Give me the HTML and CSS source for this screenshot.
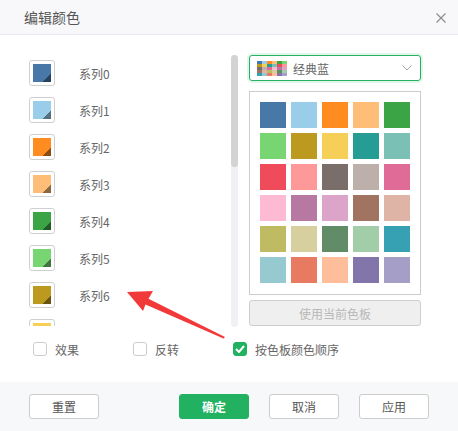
FILE: index.html
```html
<!DOCTYPE html>
<html lang="zh">
<head>
<meta charset="utf-8">
<title>编辑颜色</title>
<link rel="stylesheet" href="styles.css">
</head>
<body>
<div class="dialog">
  <div class="header">
    <span class="title">编辑颜色</span>
    <svg class="close" width="10" height="10" viewBox="0 0 10 10"><path d="M0.5 0.5 L9.5 9.5 M9.5 0.5 L0.5 9.5" stroke="#8a8a8a" stroke-width="1.1" fill="none"/></svg>
  </div>
  <div class="main">
    <div class="top">
      <div class="list">
        <div class="row"><span class="sw"><i style="background:#4778a8"></i></span><span class="lbl">系列0</span></div>
        <div class="row"><span class="sw"><i style="background:#9acde9"></i></span><span class="lbl">系列1</span></div>
        <div class="row"><span class="sw"><i style="background:#ff8c21"></i></span><span class="lbl">系列2</span></div>
        <div class="row"><span class="sw"><i style="background:#ffbe78"></i></span><span class="lbl">系列3</span></div>
        <div class="row"><span class="sw"><i style="background:#3ba546"></i></span><span class="lbl">系列4</span></div>
        <div class="row"><span class="sw"><i style="background:#78d672"></i></span><span class="lbl">系列5</span></div>
        <div class="row"><span class="sw"><i style="background:#bb9a1f"></i></span><span class="lbl">系列6</span></div>
        <div class="row"><span class="sw"><i style="background:#f5cf57"></i></span><span class="lbl">系列7</span></div>
      </div>
      <div class="track"><div class="thumb"></div></div>
      <div class="right">
        <div class="select">
          <span class="mosaic">
            <i style="background:#4778a8"></i><i style="background:#9acde9"></i><i style="background:#ff8c21"></i><i style="background:#ffbe78"></i><i style="background:#3ba546"></i><i style="background:#78d672"></i>
            <i style="background:#bb9a1f"></i><i style="background:#f5cf57"></i><i style="background:#259d94"></i><i style="background:#7bc0b5"></i><i style="background:#f04b5a"></i><i style="background:#ff9999"></i>
            <i style="background:#7a6e6b"></i><i style="background:#bdb0ab"></i><i style="background:#e06b97"></i><i style="background:#feb9d3"></i><i style="background:#b778a1"></i><i style="background:#dba4c8"></i>
            <i style="background:#a07460"></i><i style="background:#ddb4a6"></i><i style="background:#bfbb63"></i><i style="background:#d8cf9f"></i><i style="background:#618c67"></i><i style="background:#a2cda9"></i>
            <i style="background:#36a1b3"></i><i style="background:#96c9d0"></i><i style="background:#e77a60"></i><i style="background:#febd9b"></i><i style="background:#8275a9"></i><i style="background:#a59fc8"></i>
          </span>
          <span class="sel-text">经典蓝</span>
          <svg class="chev" width="10" height="6" viewBox="0 0 10 6"><path d="M0.5 0.5 L5 5 L9.5 0.5" stroke="#aaa" stroke-width="1" fill="none"/></svg>
        </div>
        <div class="palette">
          <i style="background:#4778a8"></i><i style="background:#9acde9"></i><i style="background:#ff8c21"></i><i style="background:#ffbe78"></i><i style="background:#3ba546"></i>
          <i style="background:#78d672"></i><i style="background:#bb9a1f"></i><i style="background:#f5cf57"></i><i style="background:#259d94"></i><i style="background:#7bc0b5"></i>
          <i style="background:#f04b5a"></i><i style="background:#ff9999"></i><i style="background:#7a6e6b"></i><i style="background:#bdb0ab"></i><i style="background:#e06b97"></i>
          <i style="background:#feb9d3"></i><i style="background:#b778a1"></i><i style="background:#dba4c8"></i><i style="background:#a07460"></i><i style="background:#ddb4a6"></i>
          <i style="background:#bfbb63"></i><i style="background:#d8cf9f"></i><i style="background:#618c67"></i><i style="background:#a2cda9"></i><i style="background:#36a1b3"></i>
          <i style="background:#96c9d0"></i><i style="background:#e77a60"></i><i style="background:#febd9b"></i><i style="background:#8275a9"></i><i style="background:#a59fc8"></i>
        </div>
        <div class="use-btn">使用当前色板</div>
      </div>
    </div>
    <div class="options">
      <label class="opt o1"><span class="cb"></span>效果</label>
      <label class="opt o2"><span class="cb"></span>反转</label>
      <label class="opt"><span class="cb on"><svg width="10" height="8" viewBox="0 0 10 8"><path d="M1 4 L4 7 L9 1" stroke="#fff" stroke-width="2" fill="none"/></svg></span>按色板颜色顺序</label>
    </div>
  </div>
  <div class="footer">
    <div class="btn reset">重置</div>
    <div class="btn primary">确定</div>
    <div class="btn">取消</div>
    <div class="btn">应用</div>
  </div>
  <svg class="arrow" width="458" height="431" viewBox="0 0 458 431">
    <polygon points="127,292 153,291 148.5,298.8 225,337 223.5,338.5 145.5,304.5 143,311" fill="#f2393a"/>
  </svg>
</div>
</body>
</html>
```
FILE: styles.css
```css
* { box-sizing: border-box; }
html, body { margin: 0; padding: 0; background: #fff; }
body { font-family: "Noto Sans CJK SC", "Noto Sans", sans-serif; color: #666; }
.dialog { position: relative; width: 458px; height: 431px; display: flex; flex-direction: column; background: #fff; overflow: hidden; }
.header { height: 35px; flex: none; background: #f8f8fa; border-bottom: 1px solid #e6e7ef; display: flex; align-items: center; justify-content: space-between; padding: 0 12px 0 24px; }
.title { font-size: 14px; color: #555; line-height: 1; }
.close { display: block; margin-top: 1px; }
.main { flex: 1; padding: 20px 0 0 29px; }
.top { display: flex; height: 272px; }
.list { width: 202px; height: 271px; overflow: hidden; padding-top: 5px; }
.row { display: flex; align-items: center; height: 26px; margin-bottom: 11px; }
.sw { position: relative; width: 26px; height: 26px; border: 1px solid #cfcfcf; border-radius: 3px; padding: 3px; flex: none; }
.sw i { display: block; width: 18px; height: 18px; position: relative; }
.sw i::after { content: ""; position: absolute; right: 0; bottom: 0; width: 8px; height: 8px; background: linear-gradient(to bottom right, transparent 50%, rgba(0,0,0,0.45) 50%); }
.lbl { margin-left: 24px; font-size: 12px; color: #666; }
.track { width: 7px; height: 272px; background: #f0f1f4; border-radius: 4px; margin-left: 0; flex: none; }
.thumb { height: 112px; background: #d3d3d3; border-radius: 4px; }
.right { width: 172px; margin-left: 11px; display: flex; flex-direction: column; }
.select { height: 26px; border: 1px solid #21b161; border-radius: 3px; box-shadow: 0 0 0 2px rgba(33,177,97,0.12); display: flex; align-items: center; padding: 0 8px 0 7px; }
.mosaic { display: grid; grid-template-columns: repeat(6, 5px); grid-auto-rows: 3px; width: 30px; height: 15px; flex: none; }
.mosaic i { display: block; }
.sel-text { margin-left: 6px; font-size: 12px; color: #666; flex: 1; }
.chev { display: block; }
.palette { margin-top: 10px; border: 1px solid #cccccc; padding: 10px 11px 11px 10px; display: grid; grid-template-columns: repeat(5, 26px); grid-auto-rows: 26px; gap: 5px; }
.palette i { display: block; }
.use-btn { margin-top: 5px; height: 26px; border: 1px solid #cfcfcf; border-radius: 3px; background: #efefef; color: #b8b8b8; font-size: 12px; display: flex; align-items: center; justify-content: center; }
.options { display: flex; align-items: center; height: 20px; margin-top: 12px; padding-left: 4px; }
.opt { display: flex; align-items: center; font-size: 12px; color: #666; }
.o1, .o2 { width: 100px; }
.cb { width: 14px; height: 14px; border: 1px solid #cccccc; border-radius: 3px; background: #fff; margin-right: 8px; display: flex; align-items: center; justify-content: center; }
.cb.on { background: #21b161; border-color: #21b161; }
.cb svg { display: block; }
.footer { height: 49px; flex: none; background: #f7f8fa; display: flex; align-items: flex-start; padding: 12px 0 0 29px; }
.btn { width: 70px; height: 25px; border: 1px solid #cccccc; border-radius: 3px; background: #fff; font-size: 12px; color: #555; display: flex; align-items: center; justify-content: center; margin-right: 20px; }
.btn.reset { margin-right: 80px; }
.btn.primary { background: #21b161; border-color: #21b161; color: #fff; font-weight: bold; }
.arrow { position: absolute; left: 0; top: 0; pointer-events: none; }
```
